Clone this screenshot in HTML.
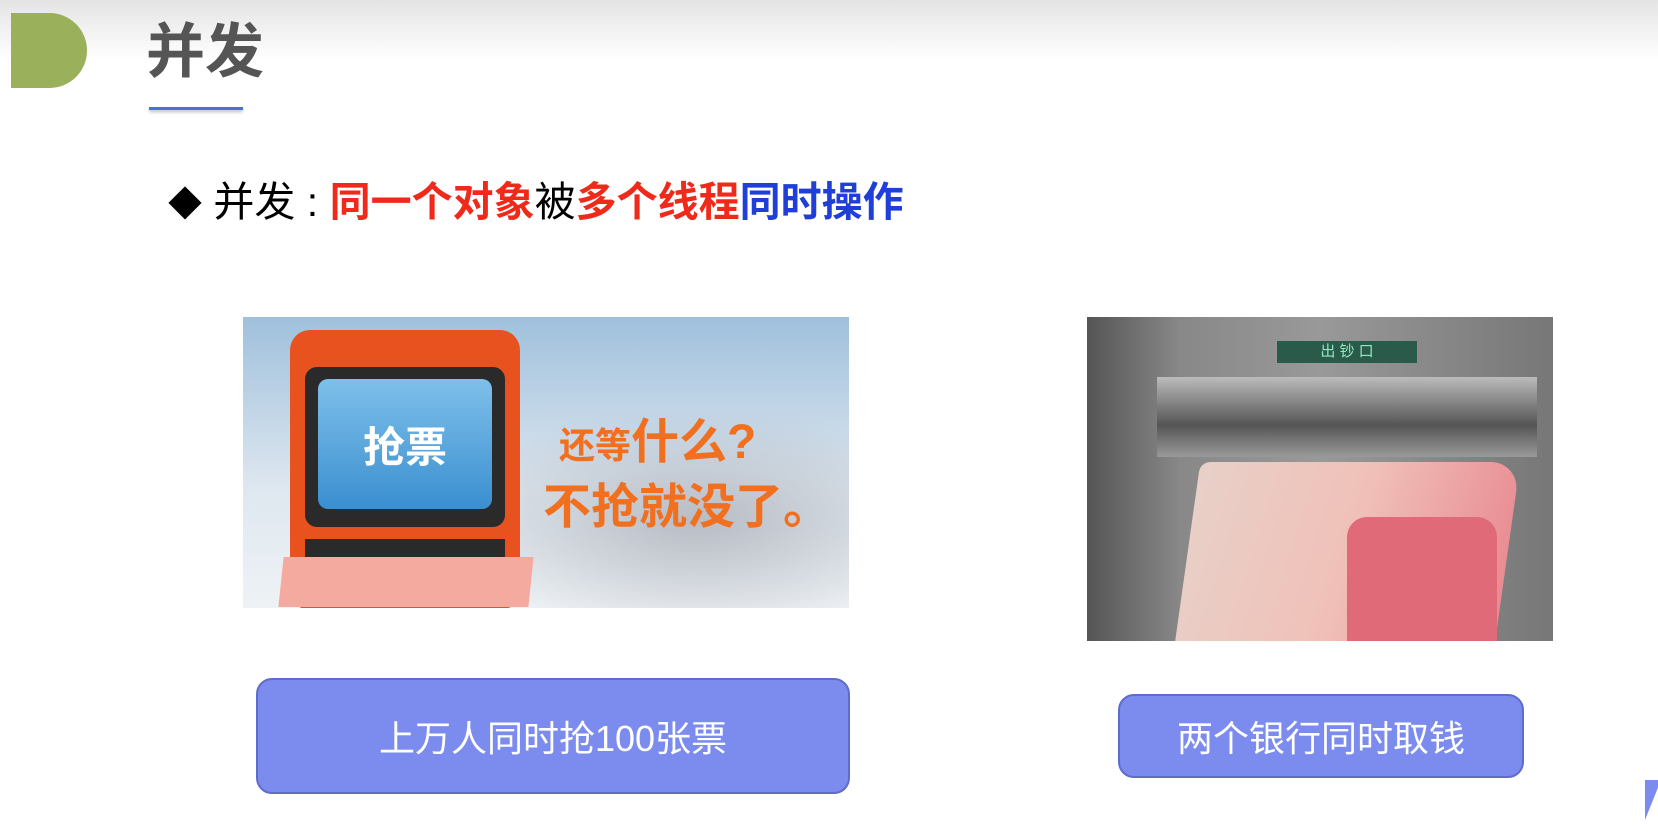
<!DOCTYPE html>
<html><head><meta charset="utf-8"><style>
body{margin:0;width:1658px;height:840px;background:#fff;position:relative;overflow:hidden;font-family:"Liberation Sans","Noto Sans CJK SC",sans-serif}
.abs{position:absolute}
.top{left:0;top:0;width:1658px;height:60px;background:linear-gradient(#e4e4e4,#fff)}
.d{left:11px;top:13px;width:76px;height:75px;background:#9bb05a;border-radius:0 38px 38px 0}
.title{left:146px;top:14px;font-size:59px;font-weight:bold;color:#555;line-height:76px}
.ul{left:149px;top:107px;width:94px;height:3px;background:#4a6fe0;box-shadow:0 2px 3px #bbb}
.line{left:168px;top:175px;font-size:41px;line-height:54px;white-space:nowrap}
.r{color:#f02a1a;font-weight:bold}.b{color:#1f3fd8;font-weight:bold}
.btn{background:#7b8cee;border:2px solid #5f6dc8;border-radius:16px;color:#fff;display:flex;align-items:center;justify-content:center;font-size:36px;box-sizing:border-box}
</style></head><body>
<div class="abs top"></div>
<div class="abs d"></div>
<div class="abs title">并发</div>
<div class="abs ul"></div>
<div class="abs line"><span style="font-size:34px">◆</span> 并发 : <span class="r">同一个对象</span>被<span class="r">多个线程</span><span class="b">同时操作</span></div>

<div class="abs" style="left:243px;top:317px;width:606px;height:291px;background:radial-gradient(ellipse at 75% 70%,#b8bcc4,transparent 40%),linear-gradient(#9fc0dc,#dfe8f0 60%,#eef2f5);overflow:hidden">
 <div class="abs" style="left:47px;top:13px;width:230px;height:280px;background:#e8521f;border-radius:20px"></div>
 <div class="abs" style="left:62px;top:50px;width:200px;height:160px;background:#2a2a2a;border-radius:12px"></div>
 <div class="abs" style="left:75px;top:62px;width:174px;height:130px;background:linear-gradient(#7fc0ea,#3a8fd0);border-radius:10px;color:#fff;font-size:42px;font-weight:bold;display:flex;align-items:center;justify-content:center">抢票</div>
 <div class="abs" style="left:62px;top:222px;width:200px;height:30px;background:#2a2a2a"></div>
 <div class="abs" style="left:38px;top:240px;width:250px;height:50px;background:#f5aaa0;transform:skewX(-6deg)"></div>
 <div class="abs" style="left:300px;top:95px;color:#f07020;font-size:48px;font-weight:bold;line-height:62px;white-space:nowrap"><span style="font-size:36px;margin-left:16px">还等</span>什么?<br>不抢就没了。</div>
</div>

<div class="abs" style="left:1087px;top:317px;width:466px;height:324px;background:linear-gradient(90deg,#555 0,#888 20%,#999 50%,#777 100%);overflow:hidden">
 <div class="abs" style="left:190px;top:24px;width:140px;height:22px;background:#2a5a4a;color:#8fe8c0;font-size:15px;line-height:22px;text-align:center">出 钞 口</div>
 <div class="abs" style="left:70px;top:60px;width:380px;height:80px;background:linear-gradient(#bbb,#555 60%,#999)"></div>
 <div class="abs" style="left:100px;top:145px;width:320px;height:190px;background:linear-gradient(100deg,#e8d0c8,#f0c0b8 50%,#e88890);transform:skewX(-8deg);border-radius:10px 30px 0 0"></div>
 <div class="abs" style="left:260px;top:200px;width:150px;height:130px;background:#e06a78;border-radius:20px 20px 0 0"></div>
</div>

<div class="abs btn" style="left:256px;top:678px;width:594px;height:116px">上万人同时抢100张票</div>
<div class="abs btn" style="left:1118px;top:694px;width:406px;height:84px">两个银行同时取钱</div>
<div class="abs" style="left:1645px;top:780px;width:0;height:0;border-left:16px solid #7b8cee;border-bottom:40px solid transparent"></div>
</body></html>
